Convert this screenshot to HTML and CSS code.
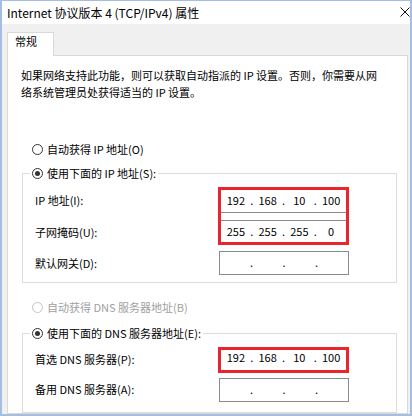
FILE: index.html
```html
<!DOCTYPE html>
<html lang="zh-CN">
<head>
<meta charset="utf-8">
<title>Internet 协议版本 4 (TCP/IPv4) 属性</title>
<link rel="stylesheet" href="styles.css">
</head>
<body>
<div class="window">
  <div class="titlebar">
    <span class="title">Internet 协议版本 4 (TCP/IPv4) 属性</span>
    <svg class="close" width="10" height="10" viewBox="0 0 10 10"><path d="M0.5 0.5L9.5 9.5M9.5 0.5L0.5 9.5" stroke="#111" stroke-width="1" fill="none"/></svg>
  </div>
  <div class="tabstrip">
    <div class="tab">常规</div>
    <div class="tab-fill"></div>
  </div>
  <div class="panel">
    <p class="desc">如果网络支持此功能，则可以获取自动指派的 IP 设置。否则，你需要从网<br>络系统管理员处获得适当的 IP 设置。</p>

    <div class="radio-row first"><span class="radio"></span>自动获得 IP 地址(O)</div>
    <fieldset class="group ip-group">
      <legend class="radio-row"><span class="radio checked"></span>使用下面的 IP 地址(S):</legend>
      <div class="rows">
        <div class="labels">
          <div class="label ip1">IP 地址(I):</div>
          <div class="label ip2">子网掩码(U):</div>
          <div class="label ip3">默认网关(D):</div>
        </div>
        <div class="fields">
          <div class="hl">
            <div class="ipbox upper"><span class="oct">192</span><span class="dot">.</span><span class="oct">168</span><span class="dot">.</span><span class="oct">10</span><span class="dot">.</span><span class="oct">100</span></div>
            <div class="ipbox lower"><span class="oct">255</span><span class="dot">.</span><span class="oct">255</span><span class="dot">.</span><span class="oct">255</span><span class="dot">.</span><span class="oct">0</span></div>
          </div>
          <div class="ipbox plain gap6"><span class="oct"></span><span class="dot">.</span><span class="oct"></span><span class="dot">.</span><span class="oct"></span><span class="dot">.</span><span class="oct"></span></div>
        </div>
      </div>
    </fieldset>

    <div class="radio-row disabled second"><span class="radio"></span>自动获得 DNS 服务器地址(B)</div>
    <fieldset class="group dns-group">
      <legend class="radio-row"><span class="radio checked"></span>使用下面的 DNS 服务器地址(E):</legend>
      <div class="rows">
        <div class="labels">
          <div class="label dns1">首选 DNS 服务器(P):</div>
          <div class="label dns2">备用 DNS 服务器(A):</div>
        </div>
        <div class="fields">
          <div class="hl">
            <div class="ipbox single"><span class="oct">192</span><span class="dot">.</span><span class="oct">168</span><span class="dot">.</span><span class="oct">10</span><span class="dot">.</span><span class="oct">100</span></div>
          </div>
          <div class="ipbox plain gap5"><span class="oct"></span><span class="dot">.</span><span class="oct"></span><span class="dot">.</span><span class="oct"></span><span class="dot">.</span><span class="oct"></span></div>
        </div>
      </div>
    </fieldset>
  </div>
</div>
</body>
</html>
```

FILE: styles.css
```css
* { box-sizing: border-box; }

html, body {
  margin: 0;
  padding: 0;
  background: #ffffff;
}

body {
  font-family: "Noto Sans CJK SC", sans-serif;
  font-size: 11px;
  color: #000;
}

.window {
  width: 412px;
  height: 416px;
  border: 2px solid #a2bee3;
  border-top-width: 1px;
  background: #f0f0f0;
  display: flex;
  flex-direction: column;
  overflow: hidden;
}

.titlebar {
  flex: none;
  height: 23px;
  background: #fff;
  display: flex;
  align-items: center;
  justify-content: space-between;
  padding-left: 5px;
}

.title {
  font-size: 12px;
  line-height: 23px;
}

.close {
  display: block;
  margin-top: -1px;
}

.tabstrip {
  flex: none;
  display: flex;
  padding: 8px 2px 0 5px;
}

.tab {
  width: 47px;
  height: 24px;
  border: 1px solid #d9d9d9;
  border-bottom: none;
  background: #fff;
  padding-left: 7px;
  line-height: 17px;
}

.tab-fill {
  flex: 1;
  border-bottom: 1px solid #d9d9d9;
}

.panel {
  flex: 1;
  margin: 0 2px 0 5px;
  background: #fff;
  border: 1px solid #d9d9d9;
  border-top: none;
  padding-top: 11px;
}

.desc {
  margin: 0 0 0 13px;
  line-height: 17px;
}

.radio-row {
  display: flex;
  align-items: center;
  height: 18px;
  line-height: 18px;
  white-space: nowrap;
}

.radio-row.first { margin: 39px 0 0 24px; }
.radio-row.second { margin: 15px 0 0 24px; }

.radio {
  flex: none;
  width: 11px;
  height: 11px;
  border: 1px solid #333;
  border-radius: 50%;
  background: #fff;
  margin-right: 4px;
  display: flex;
  align-items: center;
  justify-content: center;
}

.radio.checked::after {
  content: "";
  width: 5px;
  height: 5px;
  border-radius: 50%;
  background: #333;
}

.disabled { color: #a0a0a0; }
.disabled .radio { border-color: #c4c4c4; }

.group {
  margin: 6px 10px 0 14px;
  padding: 5px 47px 7px 7px;
  border: 1px solid #dcdcdc;
  min-width: 0;
}

.dns-group {
  margin-top: 8px;
  padding-bottom: 10px;
}

.group legend {
  padding: 0 2px;
}

.rows {
  display: grid;
  grid-template-columns: 1fr 131px;
  margin-left: 5px;
}

.labels {
  display: flex;
  flex-direction: column;
}

.label {
  height: 24px;
  line-height: 24px;
  white-space: nowrap;
}

.label.ip1 { margin-top: 1px; }
.label.ip2 { margin-top: 8px; }
.label.ip3 { margin-top: 7px; }
.label.dns1 { height: 26px; line-height: 25px; }
.label.dns2 { margin-top: 5px; line-height: 22px; }

.fields {
  display: flex;
  flex-direction: column;
}

.hl {
  border: 3px solid #e8262c;
}

.ipbox {
  display: flex;
  line-height: 20px;
  color: #000;
}

.oct {
  flex: 1;
  text-align: center;
}

.dot {
  flex: none;
  width: 2px;
  display: flex;
  justify-content: center;
}

.ipbox.upper {
  height: 23px;
  border-bottom: 1px solid #8a8a8a;
  margin-bottom: 7px;
}

.ipbox.lower {
  height: 22px;
  border-top: 1px solid #8a8a8a;
}

.ipbox.single {
  height: 20px;
  line-height: 15px;
}

.ipbox.plain {
  height: 24px;
  margin-left: 1px;
  border: 1px solid #8a8a8a;
}

.gap6 { margin-top: 6px; }
.gap5 { margin-top: 5px; }
```
